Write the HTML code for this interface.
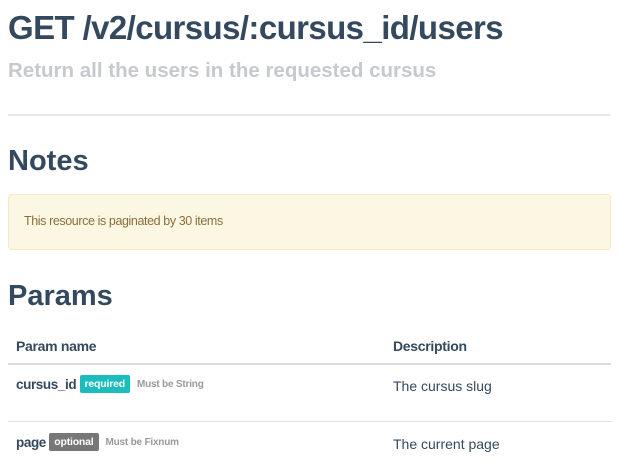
<!DOCTYPE html>
<html><head><style>
body{margin:0;width:619px;height:462px;overflow:hidden;background:#fff;font-family:"Liberation Sans",sans-serif;color:#34495e;position:relative}
.a{position:absolute;white-space:nowrap}
.b{display:inline-block;color:#fff;font-size:10.5px;font-weight:bold;padding:3px 5px;border-radius:2px;vertical-align:2px;letter-spacing:-0.2px}
.m{color:#999;font-size:10px;font-weight:bold;margin-left:7px;vertical-align:2px;letter-spacing:-0.2px}
</style></head><body>
<div class="a" style="left:8px;top:9px;font-size:33px;font-weight:bold;letter-spacing:-0.6px">GET /v2/cursus/:cursus_id/users</div>
<div class="a" style="left:8px;top:59px;font-size:20.5px;font-weight:bold;color:#c6c9ce">Return all the users in the requested cursus</div>
<div class="a" style="left:8px;top:114px;width:603px;height:2px;background:#e8e9ed"></div>
<div class="a" style="left:8px;top:145px;font-size:29px;font-weight:bold">Notes</div>
<div class="a" style="left:8px;top:194px;width:601px;height:54px;background:#fcf7e2;border:1px solid #f8e8c5;border-radius:4px"></div>
<div class="a" style="left:24px;top:214px;font-size:12.5px;color:#8a6d3b;letter-spacing:-0.4px">This resource is paginated by 30 items</div>
<div class="a" style="left:8px;top:280px;font-size:29px;font-weight:bold">Params</div>
<div class="a" style="left:16px;top:338px;font-size:14px;font-weight:bold;letter-spacing:-0.3px">Param name</div>
<div class="a" style="left:393px;top:338px;font-size:14px;font-weight:bold;letter-spacing:-0.3px">Description</div>
<div class="a" style="left:8px;top:363px;width:603px;height:2px;background:#ddd"></div>
<div class="a" style="left:16px;top:375px;font-size:13.5px;font-weight:bold;letter-spacing:-0.4px">cursus_id <span class="b" style="background:#1abcbc">required</span><span class="m">Must be String</span></div>
<div class="a" style="left:393px;top:378px;font-size:14px">The cursus slug</div>
<div class="a" style="left:8px;top:421px;width:603px;height:1px;background:#ddd"></div>
<div class="a" style="left:16px;top:433px;font-size:13.5px;font-weight:bold;letter-spacing:-0.4px">page <span class="b" style="background:#777">optional</span><span class="m">Must be Fixnum</span></div>
<div class="a" style="left:393px;top:436px;font-size:14px">The current page</div>
</body></html>
